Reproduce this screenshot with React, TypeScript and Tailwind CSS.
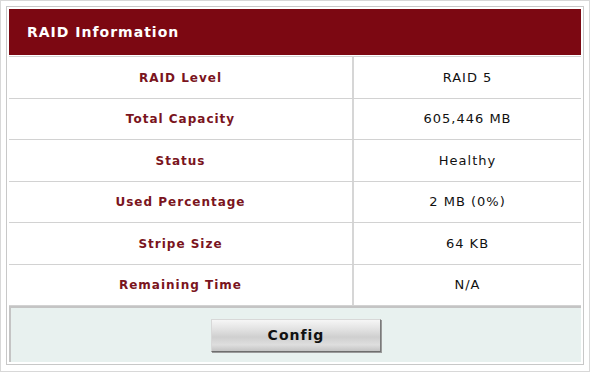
import React from "react";

const rows: { label: string; value: string; h: string }[] = [
  { label: "RAID Level", value: "RAID 5", h: "h-[42px]" },
  { label: "Total Capacity", value: "605,446 MB", h: "h-[41px]" },
  { label: "Status", value: "Healthy", h: "h-[42px]" },
  { label: "Used Percentage", value: "2 MB (0%)", h: "h-[41px]" },
  { label: "Stripe Size", value: "64 KB", h: "h-[42px]" },
  { label: "Remaining Time", value: "N/A", h: "h-[41px]" },
];

export default function App() {
  return (
    <div
      className="w-[590px] h-[372px] bg-white border border-[#d8d8d8] pt-[5px] pl-[5px]"
      style={{ fontFamily: '"DejaVu Sans", Verdana, sans-serif' }}
    >
      <div className="w-[578px] h-[359px] border border-[#c8c8c8] p-[2px] flex flex-col">
        <div className="h-[46px] shrink-0 bg-[#7c0812] flex items-center pl-[18px] pt-[1px] text-white font-bold text-[14px] tracking-[1px]">
          RAID Information
        </div>
        <div className="mt-[1px] border-t border-[#d2d2d2] flex flex-col shrink-0">
          {rows.map((r) => (
            <div key={r.label} className={`flex border-b border-[#d2d2d2] ${r.h}`}>
              <div className="w-[345px] flex items-center justify-center font-bold text-[12px] tracking-[1px] text-[#7a1420] border-r-2 border-[#d6d6d6]">
                {r.label}
              </div>
              <div className="flex-1 flex items-center justify-center text-[13px] tracking-[1px] text-[#111]">
                {r.value}
              </div>
            </div>
          ))}
        </div>
        <div className="flex-1 bg-[#e8f1ef] border-l-2 border-t-2 border-[#c4c4c4] flex items-center justify-center">
          <button className="mt-[1px] w-[170px] h-[33px] border border-t-[#d8d8d8] border-l-[#d8d8d8] border-r-[#7a7a7a] border-b-[#6e6e6e] bg-[linear-gradient(180deg,#f6f6f6_0%,#e2e2e2_30%,#cfcfcf_55%,#dedede_80%,#c4c4c4_100%)] font-bold text-[14px] tracking-[1px] text-[#111] shadow-[1px_1px_0_#9a9a9a]">
            Config
          </button>
        </div>
      </div>
    </div>
  );
}
